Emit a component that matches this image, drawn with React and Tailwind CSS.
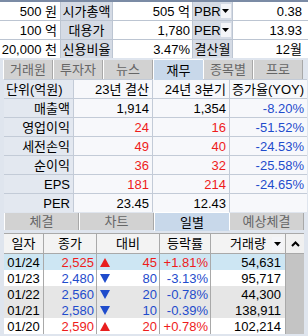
import React from "react";

const RED = "text-[#ee1c1c]";
const BLUE = "text-[#1f4ccc]";

function DropBox() {
  return (
    <div className="w-[11px] h-[14px] bg-[#f4f5f8] flex items-center justify-center">
      <svg width="7" height="4" viewBox="0 0 7 4"><polygon points="0,0 7,0 3.5,4" fill="#000" /></svg>
    </div>
  );
}

function Tri({ up }) {
  return up ? (
    <svg width="10" height="9" viewBox="0 0 10 9"><polygon points="5,0 10,9 0,9" fill="#e81e1e" /></svg>
  ) : (
    <svg width="10" height="9" viewBox="0 0 10 9"><polygon points="0,0 10,0 5,9" fill="#1f4ccc" /></svg>
  );
}

const top = [
  ["500 원", "시가총액", "505 억", "PBR", true, "0.38"],
  ["100 억", "대용가", "1,780", "PER", true, "13.93"],
  ["20,000 천", "신용비율", "3.47%", "결산월", false, "12월"],
];

const fin = [
  ["매출액", "1,914", "1,354", "-8.20%", "", ""],
  ["영업이익", "24", "16", "-51.52%", RED, RED],
  ["세전손익", "49", "40", "-24.53%", RED, RED],
  ["순이익", "36", "32", "-25.58%", RED, RED],
  ["EPS", "181", "214", "-24.65%", RED, RED],
  ["PER", "23.45", "12.43", "", "", ""],
];

const daily = [
  { d: "01/24", c: "2,525", up: true, ch: "45", r: "+1.81%", v: "54,631", bg: "bg-[#cde6f3]" },
  { d: "01/23", c: "2,480", up: false, ch: "80", r: "-3.13%", v: "95,717", bg: "bg-white" },
  { d: "01/22", c: "2,560", up: false, ch: "20", r: "-0.78%", v: "44,300", bg: "bg-[#e6e6e6]" },
  { d: "01/21", c: "2,580", up: false, ch: "10", r: "-0.39%", v: "138,911", bg: "bg-[#e6e6e6]" },
  { d: "01/20", c: "2,590", up: true, ch: "20", r: "+0.78%", v: "102,214", bg: "bg-white" },
];

export default function App() {
  return (
    <div className="w-[308px] h-[336px] overflow-hidden bg-[#dfe5ee] text-[13px] leading-none text-black font-['Liberation_Sans','Noto_Sans_CJK_KR',sans-serif]">
      <div className="h-[2px] bg-[#7b8ba5]" />
      <div className="grid grid-cols-[60px_51px_79px_39px_75px] gap-px bg-[#bcc5d2]">
        {top.map((r, i) => (
          <React.Fragment key={i}>
            <div className="h-[18px] bg-white flex items-center justify-end pr-[3px] whitespace-nowrap">{r[0]}</div>
            <div className="h-[18px] bg-[#d5dbe5] flex items-center justify-center whitespace-nowrap">{r[1]}</div>
            <div className="h-[18px] bg-white flex items-center justify-end pr-[2px] whitespace-nowrap">{r[2]}</div>
            <div className={`h-[18px] bg-[#d5dbe5] flex items-center whitespace-nowrap ${r[4] ? "justify-between pl-[1px] pr-[1px]" : "justify-center"}`}>
              <span>{r[3]}</span>
              {r[4] && <DropBox />}
            </div>
            <div className="h-[18px] bg-white flex items-center justify-end pr-[6px] whitespace-nowrap">{r[5]}</div>
          </React.Fragment>
        ))}
      </div>

      <div className="flex pl-[3px] pt-[1px] h-[21px] items-start">
        {["거래원", "투자자", "뉴스", "재무", "종목별", "프로"].map((t) =>
          t === "재무" ? (
            <div key={t} className="w-[50px] h-[21px] bg-[#c8d8ea] border-l border-t border-white flex items-center justify-center">{t}</div>
          ) : (
            <div key={t} className="w-[50px] h-[19px] mt-[1px] bg-[#d2d2d2] border-l border-white border-r border-r-[#a8a8a8] flex items-center justify-center text-[#666]">{t}</div>
          )
        )}
      </div>

      <div className="pl-[4px] pr-[1px]">
        <div className="grid grid-cols-[69px_78px_76px_77px] gap-px bg-[#c3cbd7] border-t border-[#c3cbd7]">
          <div className="h-[18px] bg-[#e3e8f0] flex items-center pl-[2px] whitespace-nowrap">단위(억원)</div>
          <div className="h-[18px] bg-[#f7f8fb] flex items-center justify-end pr-[3px] whitespace-nowrap">23년 결산</div>
          <div className="h-[18px] bg-[#f7f8fb] flex items-center justify-end pr-[3px] whitespace-nowrap">24년 3분기</div>
          <div className="h-[18px] bg-[#f7f8fb] flex items-center justify-end pr-[3px] whitespace-nowrap">증가율(YOY)</div>
          {fin.map((r) => (
            <React.Fragment key={r[0]}>
              <div className="h-[18px] bg-[#e3e8f0] flex items-center justify-end pr-[3px] whitespace-nowrap">{r[0]}</div>
              <div className={`h-[18px] bg-[#f7f8fb] flex items-center justify-end pr-[3px] ${r[4]}`}>{r[1]}</div>
              <div className={`h-[18px] bg-[#f7f8fb] flex items-center justify-end pr-[3px] ${r[5]}`}>{r[2]}</div>
              <div className={`h-[18px] bg-[#f7f8fb] flex items-center justify-end pr-[3px] ${BLUE}`}>{r[3]}</div>
            </React.Fragment>
          ))}
        </div>
      </div>

      <div className="flex pl-[4px] h-[19px] items-start">
        {["체결", "차트", "일별", "예상체결"].map((t) =>
          t === "일별" ? (
            <div key={t} className="w-[75px] h-[19px] bg-[#c8d8ea] border-l border-t border-white flex items-center justify-center">{t}</div>
          ) : (
            <div key={t} className="w-[75px] h-[17px] mt-[1px] bg-[#d2d2d2] border-l border-white border-r border-r-[#a8a8a8] flex items-center justify-center text-[#666]">{t}</div>
          )
        )}
      </div>

      <div className="flex pl-[4px] pt-[2px]">
        <div className="flex flex-col">
          <div className="flex h-[21px] bg-[#f3f3f3] border-t border-b border-[#a9a9a9]">
            <div className="w-[40px] border-r border-[#a9a9a9] flex items-center justify-center">일자</div>
            <div className="w-[53px] border-r border-[#a9a9a9] flex items-center justify-center">종가</div>
            <div className="w-[63px] border-r border-[#a9a9a9] flex items-center justify-center">대비</div>
            <div className="w-[51px] border-r border-[#a9a9a9] flex items-center justify-center">등락률</div>
            <div className="w-[75px] border-r border-[#a9a9a9] flex items-center justify-end pr-[2px] gap-[6px]">
              <span>거래량</span>
              <DropBox />
            </div>
          </div>
          {daily.map((r) => (
            <div key={r.d} className={`flex h-[16px] ${r.bg}`}>
              <div className="w-[40px] border-r border-[#a9a9a9] flex items-center justify-center">{r.d}</div>
              <div className={`w-[53px] border-r border-[#a9a9a9] flex items-center justify-end pr-[2px] ${r.up ? RED : BLUE}`}>{r.c}</div>
              <div className={`w-[63px] border-r border-[#a9a9a9] flex items-center justify-between pl-[3px] pr-[2px] ${r.up ? RED : BLUE}`}>
                <Tri up={r.up} />
                <span>{r.ch}</span>
              </div>
              <div className={`w-[51px] border-r border-[#a9a9a9] flex items-center justify-end pr-[2px] ${r.up ? RED : BLUE}`}>{r.r}</div>
              <div className="w-[75px] border-r border-[#a9a9a9] flex items-center justify-end pr-[4px]">{r.v}</div>
            </div>
          ))}
        </div>
        <div className="w-[18px] flex flex-col">
          <div className="h-[21px] bg-[#f0f0f0] border-t border-b border-[#a9a9a9] flex items-center justify-center">
            <svg width="9" height="6" viewBox="0 0 9 6"><polyline points="1,5 4.5,1.5 8,5" fill="none" stroke="#000" strokeWidth="2" /></svg>
          </div>
          <div className="flex-1 bg-[#c4c4c4]" />
        </div>
      </div>
    </div>
  );
}
